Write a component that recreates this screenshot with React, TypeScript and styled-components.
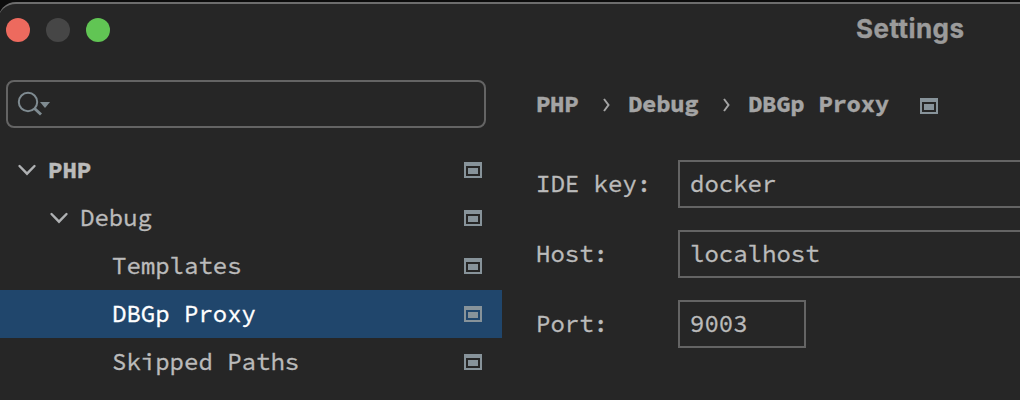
import React from "react";
import styled, { createGlobalStyle, css } from "styled-components";

const mono = `"Source Code Pro", "Noto Sans Mono CJK SC", "Liberation Mono", monospace`;

const GlobalStyle = createGlobalStyle`
  * { box-sizing: border-box; }
  body { margin: 0; background: #0c0c0c; overflow: hidden; }
`;

const Backdrop = styled.div`
  width: 1020px;
  height: 400px;
  padding-top: 2px;
  overflow: hidden;
  background: #0c0c0c;
`;

const Window = styled.main`
  width: 1820px;
  height: 600px;
  margin-left: -2px;
  padding-left: 2px;
  border-top: 2px solid #6d6d6d;
  border-top-left-radius: 18px;
  background: #262626;
  color: #bbbbbb;
  font-family: ${mono};
  font-size: 24px;
  line-height: 48px;
  white-space: pre;
  -webkit-text-stroke: 0.35px currentColor;
`;

const TitleBar = styled.header`
  display: flex;
  align-items: center;
  height: 52px;
  padding-left: 6px;
  gap: 16px;
`;

const Light = styled.span<{ $color: string }>`
  width: 24px;
  height: 24px;
  border-radius: 50%;
  background: ${(p) => p.$color};
`;

const Title = styled.h1`
  margin: -3px 0 0 730px;
  color: #9b9b9b;
  font: 700 26px/40px Inter, "Liberation Sans", sans-serif;
  letter-spacing: 0.45px;
`;

const Body = styled.div`
  display: flex;
`;

const Sidebar = styled.aside`
  width: 502px;
  padding-top: 24px;
`;

const Search = styled.div`
  display: flex;
  align-items: center;
  width: 480px;
  height: 48px;
  margin: 0 0 18px 6px;
  padding-left: 8px;
  border: 2px solid #646464;
  border-radius: 8px;
`;

const Row = styled.div<{ $depth: number; $selected?: boolean; $bold?: boolean }>`
  display: flex;
  align-items: center;
  height: 48px;
  padding: 0 20px 0 ${(p) => 16 + p.$depth * 32}px;
  font-weight: ${(p) => (p.$bold ? 700 : 400)};
  ${(p) => p.$selected && css`
    background: #20466c;
    color: #ffffff;
  `}
`;

const RowLabel = styled.span`
  flex: 1;
`;

const Arrow = styled.svg`
  width: 22px;
  height: 22px;
  margin-right: 10px;
`;

const Pane = styled.section`
  padding: 24px 0 0 34px;
`;

const Crumbs = styled.nav`
  display: flex;
  align-items: center;
  height: 48px;
  margin-bottom: 32px;
  color: #a4a4a4;
  font-weight: 700;
  letter-spacing: -0.32px;

  > svg:last-child {
    margin-top: 4px;
  }
`;

const Crumb = styled.span<{ $width: number }>`
  width: ${(p) => p.$width}px;
`;

const Separator = styled.svg`
  width: 8px;
  height: 16px;
  margin: 2px 18px 0 0;
`;

const Field = styled.label`
  display: flex;
  height: 48px;
  margin-bottom: 22px;
`;

const FieldLabel = styled.span`
  width: 142px;
`;

const Input = styled.span<{ $width: number }>`
  width: ${(p) => p.$width}px;
  padding-left: 10px;
  border: 2px solid #646464;
  line-height: 44px;
`;

const ProjectIcon = () => (
  <svg width="18" height="16" viewBox="0 0 18 16" fill="#87939a" shapeRendering="crispEdges">
    <path fillRule="evenodd" d="M0 0H18V16H0ZM2 4V14H16V4Z" />
    <path d="M4 6H14V12H4Z" />
  </svg>
);

const Chevron = () => (
  <Arrow viewBox="0 0 22 22" fill="none" stroke="#afb1b3" strokeWidth="2.4" strokeLinecap="round">
    <path d="M3.5 7L11 14.7L18.5 7" />
  </Arrow>
);

const Next = () => (
  <Separator viewBox="0 0 8 16" fill="none" stroke="#a4a4a4" strokeWidth="2">
    <path d="M2 2L6.5 8L2 14" />
  </Separator>
);

const rows = [
  { label: "PHP", depth: 0, open: true, bold: true },
  { label: "Debug", depth: 1, open: true },
  { label: "Templates", depth: 3 },
  { label: "DBGp Proxy", depth: 3, selected: true },
  { label: "Skipped Paths", depth: 3 },
];

const fields = [
  { label: "IDE key:", value: "docker", width: 900 },
  { label: "Host:", value: "localhost", width: 900 },
  { label: "Port:", value: "9003", width: 128 },
];

export default function App() {
  return (
    <Backdrop>
      <GlobalStyle />
      <Window>
        <TitleBar>
          <Light $color="#ed6a5e" />
          <Light $color="#464646" />
          <Light $color="#61c554" />
          <Title>Settings</Title>
        </TitleBar>
        <Body>
          <Sidebar>
            <Search>
              <svg width="36" height="28" viewBox="0 0 36 28" fill="none" stroke="#7f8b91">
                <circle cx="12" cy="12" r="9.2" strokeWidth="2" />
                <path d="M18.5 18.5L25 24.5" strokeWidth="3" />
                <path d="M24 12H34L29 18Z" fill="#7f8b91" stroke="none" />
              </svg>
            </Search>
            {rows.map((r) => (
              <Row key={r.label} $depth={r.depth} $selected={r.selected} $bold={r.bold}>
                {r.open && <Chevron />}
                <RowLabel>{r.label}</RowLabel>
                <ProjectIcon />
              </Row>
            ))}
          </Sidebar>
          <Pane>
            <Crumbs>
              <Crumb $width={66}>PHP</Crumb>
              <Next />
              <Crumb $width={94}>Debug</Crumb>
              <Next />
              <Crumb $width={172}>DBGp Proxy</Crumb>
              <ProjectIcon />
            </Crumbs>
            {fields.map((f) => (
              <Field key={f.label}>
                <FieldLabel>{f.label}</FieldLabel>
                <Input $width={f.width}>{f.value}</Input>
              </Field>
            ))}
          </Pane>
        </Body>
      </Window>
    </Backdrop>
  );
}
